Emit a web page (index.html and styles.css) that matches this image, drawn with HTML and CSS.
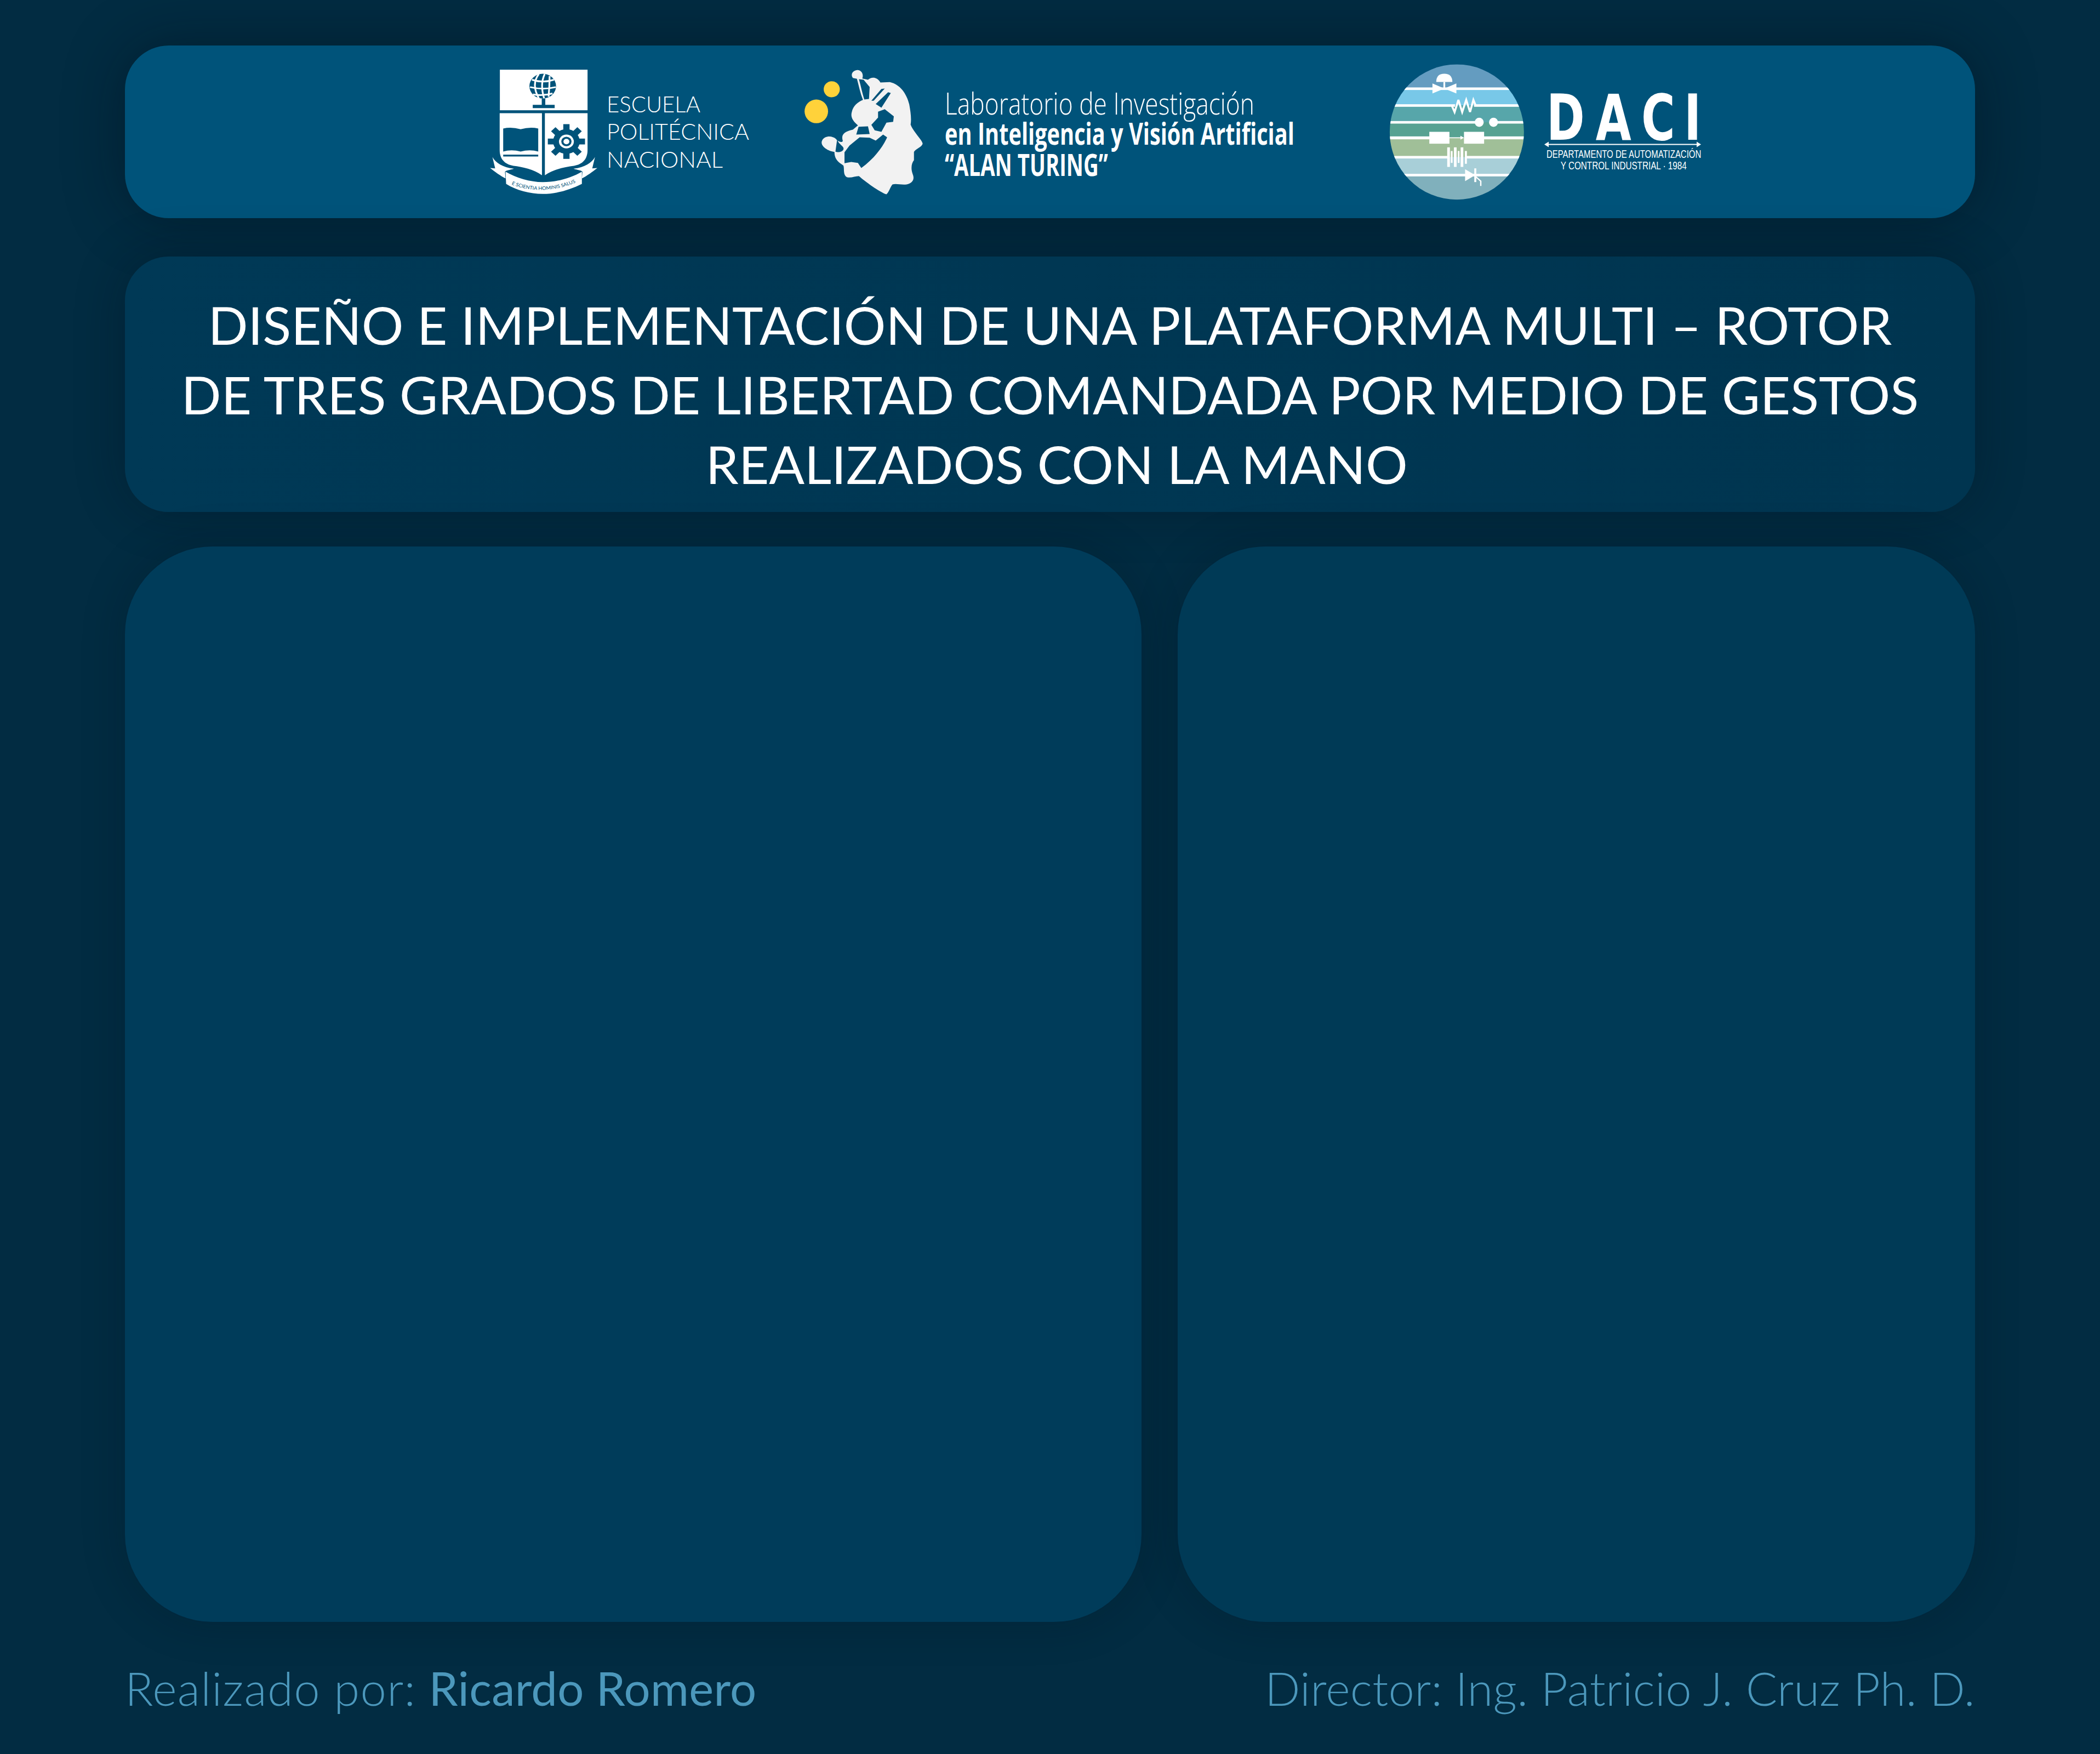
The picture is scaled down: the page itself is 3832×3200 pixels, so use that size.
FILE: index.html
```html
<!DOCTYPE html>
<html lang="es">
<head>
<meta charset="utf-8">
<title>Plataforma multi-rotor</title>
<link rel="stylesheet" href="styles.css">
</head>
<body>
<main class="page">
  <header class="logos">
    <svg class="logo logo-epn" viewBox="880 110.5 500 260" role="img" aria-label="Escuela Politécnica Nacional">
      <g transform="translate(860 90) scale(.35714 .33333)">
        <rect class="w" x="146" y="110" width="448" height="222"/>
        <circle class="b" cx="365" cy="200" r="68"/>
        <g class="gl" fill="none">
          <path d="M310,165 Q365,185 422,165"/>
          <path d="M300,205 Q365,222 432,205"/>
          <path d="M315,245 Q365,255 415,240"/>
          <path d="M345,134 Q305,190 345,266"/>
          <path d="M375,134 Q350,190 372,266"/>
          <path d="M400,145 Q400,200 395,258"/>
        </g>
        <path class="b" d="M360,268H378V302H426V320H314V302H360Z"/>
        <path class="w" d="M145,348H361V688C320,655 260,642 215,636C170,628 145,598 145,550Z"/>
        <path class="w" d="M376,348H594V550C594,598 570,628 525,636C480,642 420,655 376,688Z"/>
        <path class="b" d="M163,432Q205,422 252,436Q300,422 342,432V558Q300,545 252,558Q205,545 163,558Z"/>
        <rect class="b" x="163" y="575" width="179" height="10"/>
        <g class="b">
          <circle cx="486" cy="503" r="68"/>
          <rect x="470" y="408" width="32" height="190"/>
          <rect x="470" y="408" width="32" height="190" transform="rotate(45 486 503)"/>
          <rect x="470" y="408" width="32" height="190" transform="rotate(90 486 503)"/>
          <rect x="470" y="408" width="32" height="190" transform="rotate(135 486 503)"/>
        </g>
        <circle class="w" cx="486" cy="503" r="38"/>
        <circle class="b" cx="486" cy="503" r="26"/>
        <circle class="w" cx="486" cy="503" r="15"/>
        <path class="w" d="M108,588C125,620 160,645 218,652C195,660 180,660 172,668L175,705C150,692 120,668 96,648L122,650Z"/>
        <path class="w" d="M632,588C615,620 580,645 522,652C545,660 560,660 568,668L565,705C590,692 620,668 644,648L618,650Z"/>
        <path class="w" d="M175,668C230,702 300,725 365,725C440,725 510,702 565,668V735C500,770 430,790 365,790C300,790 230,770 178,735Z"/>
        <path id="motto-arc" fill="none" d="M205,738Q370,805 545,722"/>
        <text class="motto"><textPath href="#motto-arc">E SCIENTIA HOMINIS SALUS</textPath></text>
      </g>
      <text class="t-epn" x="1107" y="204" textLength="171" lengthAdjust="spacingAndGlyphs">ESCUELA</text>
      <text class="t-epn" x="1107" y="254" textLength="260" lengthAdjust="spacingAndGlyphs">POLITÉCNICA</text>
      <text class="t-epn" x="1107" y="305" textLength="212" lengthAdjust="spacingAndGlyphs">NACIONAL</text>
    </svg>

    <svg class="logo logo-lab" viewBox="1460 110.5 920 260" role="img" aria-label="Laboratorio Alan Turing">
      <g transform="translate(1440 100) scale(.61224 .33333)">
        <ellipse class="y" cx="127" cy="187" rx="24" ry="44"/>
        <ellipse class="y" cx="81" cy="308" rx="35" ry="65"/>
        <path class="f" d="M190,125C180,100 195,80 205,82C218,85 222,110 218,128L235,135C245,118 262,118 272,150L300,148C330,160 350,210 358,270C362,310 365,350 362,380C370,420 395,460 398,485C395,505 375,515 372,530L372,575C365,590 362,620 368,650C375,680 368,700 350,708C335,712 320,702 308,708C300,725 298,750 290,762C270,750 225,690 208,662C195,662 185,675 172,668C160,655 165,625 162,605C150,590 135,575 135,530C115,525 95,500 97,475C100,445 125,435 140,460C145,475 158,480 160,470C155,440 160,420 190,408L205,385C190,360 182,340 187,310C190,280 205,255 220,245C212,210 208,170 202,130Z"/>
        <path class="b" d="M208,132L222,135L240,175L238,240L224,243C218,210 214,170 208,132Z"/>
        <path class="b" d="M245,250L275,185L285,183L252,250Z"/>
        <path class="b" d="M258,268L295,203L303,208L275,288Z"/>
        <path class="b" d="M265,310L285,296L312,335L310,365L290,370L275,420L255,412L245,382L265,342Z"/>
        <path class="b" d="M207,392L235,390L240,432L200,435Z"/>
        <path class="b" d="M210,450L240,452L258,468L280,435L292,450C280,500 255,565 215,618L205,590L185,585L165,592L165,532L180,495Z"/>
        <path class="b" d="M143,462C148,490 165,500 162,515C160,530 145,535 138,528Z"/>
      </g>
      <g transform="translate(1724 0) scale(.68 1)">
        <text class="t-lab" x="0" y="209" textLength="831" lengthAdjust="spacingAndGlyphs">Laboratorio de Investigación</text>
        <text class="t-lab t-bold" x="0" y="264" textLength="938" lengthAdjust="spacingAndGlyphs">en Inteligencia y Visión Artificial</text>
        <text class="t-lab t-bold" x="0" y="321" textLength="438" lengthAdjust="spacingAndGlyphs">“ALAN TURING”</text>
      </g>
    </svg>

    <svg class="logo logo-daci" viewBox="2530 110.5 580 260" role="img" aria-label="DACI">
      <defs>
        <clipPath id="daci-clip"><ellipse cx="388" cy="421" rx="300" ry="370"/></clipPath>
      </defs>
      <g transform="translate(2500 100) scale(.40816 .33333)">
        <g clip-path="url(#daci-clip)">
          <rect class="d1" x="80" y="50" width="620" height="135"/>
          <rect class="d2" x="80" y="183" width="620" height="94"/>
          <rect class="d3" x="80" y="275" width="620" height="95"/>
          <rect class="d4" x="80" y="368" width="620" height="86"/>
          <rect class="d5" x="80" y="452" width="620" height="108"/>
          <rect class="d6" x="80" y="558" width="620" height="100"/>
          <rect class="d7" x="80" y="656" width="620" height="136"/>
          <g class="w">
            <rect x="80" y="177" width="620" height="14"/>
            <rect x="80" y="269" width="300" height="14"/>
            <rect x="465" y="269" width="235" height="14"/>
            <rect x="80" y="361" width="410" height="14"/>
            <rect x="552" y="361" width="150" height="14"/>
            <rect x="80" y="445" width="190" height="16"/>
            <rect x="505" y="445" width="195" height="16"/>
            <rect x="80" y="552" width="270" height="14"/>
            <rect x="430" y="552" width="270" height="14"/>
            <rect x="80" y="650" width="620" height="14"/>
          </g>
        </g>
        <path class="w" d="M296,147Q296,102 332,102Q368,102 368,147Z"/>
        <rect class="w" x="328" y="147" width="8" height="36"/>
        <path class="w" d="M279,155L332,183L279,210ZM386,155L332,183L386,210Z"/>
        <polyline class="sym" points="365,275 378,312 395,245 412,312 430,245 447,312 462,245 472,275"/>
        <ellipse class="w" cx="488" cy="368" rx="20" ry="25"/>
        <ellipse class="w" cx="552" cy="368" rx="20" ry="25"/>
        <rect class="w" x="265" y="420" width="90" height="65"/>
        <rect class="w" x="420" y="420" width="90" height="65"/>
        <rect class="w" x="355" y="450" width="55" height="5"/>
        <path class="w" d="M404,442L420,452L404,463Z"/>
        <rect class="w" x="345" y="505" width="12" height="107"/>
        <rect class="w" x="361" y="525" width="8" height="65"/>
        <rect class="w" x="375" y="505" width="12" height="107"/>
        <rect class="w" x="392" y="525" width="8" height="65"/>
        <rect class="w" x="405" y="505" width="12" height="107"/>
        <rect class="w" x="424" y="525" width="9" height="70"/>
        <path class="w" d="M425,625L470,657L425,690Z"/>
        <rect class="w" x="466" y="620" width="9" height="75"/>
        <polyline class="sym-thin" points="472,665 495,690 495,716"/>
      </g>
      <g transform="translate(2822 0) scale(.73 1)">
        <text class="t-daci" x="0 123 237 344" y="255">DACI</text>
      </g>
      <path class="rule" d="M2822,263H3100"/>
      <path class="w" d="M2818,263L2826,258V268ZM3104,263L3096,258V268Z"/>
      <g transform="translate(2822 0) scale(.68 1)">
        <text class="t-dept" x="0" y="288" textLength="415" lengthAdjust="spacingAndGlyphs">DEPARTAMENTO DE AUTOMATIZACIÓN</text>
        <text class="t-dept" x="38" y="309" textLength="338" lengthAdjust="spacingAndGlyphs">Y CONTROL INDUSTRIAL · 1984</text>
      </g>
    </svg>
  </header>

  <section class="title-card">
    <h1 class="title">DISEÑO E IMPLEMENTACIÓN DE UNA PLATAFORMA MULTI – ROTOR<br>DE TRES GRADOS DE LIBERTAD COMANDADA POR MEDIO DE GESTOS<br>&nbsp;REALIZADOS CON LA MANO</h1>
  </section>

  <section class="panels">
    <div class="panel panel-left"></div>
    <div class="panel panel-right"></div>
  </section>

  <footer class="credits">
    <p class="credit"><span class="credit-lead">Realizado por:</span> <span class="author">Ricardo Romero</span></p>
    <p class="credit">Director: Ing. Patricio J. Cruz Ph. D.</p>
  </footer>
</main>
</body>
</html>
```
FILE: styles.css
```css
* { box-sizing: border-box; }
html, body { margin: 0; padding: 0; }
body {
  background: #022c42;
  font-family: "Lato", "Open Sans", sans-serif;
}
.page {
  width: 3832px;
  height: 3200px;
  padding: 83px 228px 0;
  overflow: hidden;
  display: flex;
  flex-direction: column;
}
.logos {
  height: 315px;
  flex: none;
  display: flex;
  align-items: center;
  padding-left: 652px;
  border-radius: 80px;
  background: #00537a;
  box-shadow: 0 0 110px rgba(0, 12, 22, .42);
}
.logo { display: block; height: 260px; flex: none; }
.logo-epn { width: 500px; margin-right: 80px; }
.logo-lab { width: 920px; margin-right: 150px; }
.logo-daci { width: 580px; }

.w { fill: #fff; }
.b { fill: #00537a; }
.y { fill: #ffd23a; }
.f { fill: #f2f2f2; }
.gl { stroke: #fff; stroke-width: 9; }
.motto { font: 400 26px "Lato", sans-serif; fill: #00537a; }
.t-epn { font: 300 41px "Lato", sans-serif; fill: #fff; }
.t-lab { font: 300 56px "Open Sans", sans-serif; fill: #fff; }
.t-bold { font-weight: 700; }
.t-daci { font: 700 115px "DejaVu Sans", sans-serif; fill: #fff; }
.t-dept { font: 400 21px "Liberation Sans", sans-serif; fill: #fff; }
.rule { stroke: #fff; stroke-width: 2; fill: none; }
.d1 { fill: #649cc0; }
.d2 { fill: #78c8e8; }
.d3 { fill: #57a6aa; }
.d4 { fill: #57a292; }
.d5 { fill: #a0bf98; }
.d6 { fill: #a8cfd8; }
.d7 { fill: #80b0bc; }
.sym { fill: none; stroke: #fff; stroke-width: 9; }
.sym-thin { fill: none; stroke: #fff; stroke-width: 6; }

.title-card {
  height: 466px;
  flex: none;
  margin-top: 70px;
  padding-top: 34px;
  border-radius: 80px;
  background: linear-gradient(90deg, #003956, #003550);
  box-shadow: 0 0 90px rgba(0, 12, 22, .3);
  display: flex;
  align-items: center;
  justify-content: center;
}
.title {
  margin: 0;
  color: #fff;
  font-weight: 400;
  font-size: 95.8px;
  line-height: 127px;
  text-align: center;
  white-space: nowrap;
}
.panels {
  height: 1962px;
  flex: none;
  margin-top: 63px;
  display: flex;
  gap: 66px;
}
.panel {
  border-radius: 160px;
  background: #003c5a;
  box-shadow: 0 0 80px rgba(0, 12, 22, .22);
}
.panel-left { width: 1855px; flex: none; }
.panel-right { flex: 1; background: #003a56; }
.credits {
  flex: 1;
  display: flex;
  justify-content: space-between;
  align-items: center;
  padding-bottom: 2px;
}
.credit {
  margin: 0;
  color: #4c98bc;
  font-size: 85px;
  font-weight: 300;
  letter-spacing: .3px;
  white-space: nowrap;
}
.credit-lead { letter-spacing: 1.3px; }
.author { font-weight: 400; }
```
